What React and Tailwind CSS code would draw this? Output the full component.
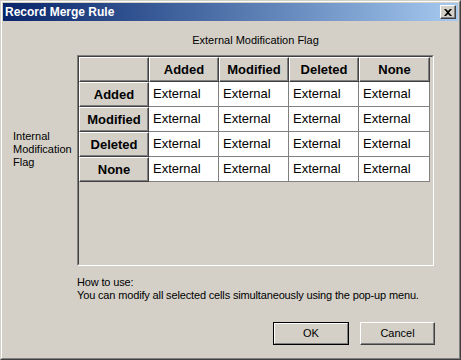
const COLS = ["Added", "Modified", "Deleted", "None"];

function HeaderCell({ children, last }) {
  return (
    <div
      className={`h-[25px] ${last ? "w-[71px]" : "w-[70px]"} flex items-center justify-center bg-[#d4d0c8] border-t border-l border-t-white border-l-white border-r border-b border-r-[#404040] border-b-[#404040] shadow-[inset_-1px_-1px_0_#808080] font-bold text-[13px] text-black`}
    >
      {children}
    </div>
  );
}

function DataCell({ last }) {
  return (
    <div
      className={`h-[25px] ${last ? "w-[71px]" : "w-[70px]"} flex items-center pl-[4px] bg-white border-r border-b border-[#808080] text-[13px] text-black`}
    >
      External
    </div>
  );
}

function Button({ children, primary }) {
  if (primary) {
    return (
      <button className="w-[76px] h-[23px] border border-black bg-[#d4d0c8] p-0">
        <div className="h-full w-full flex items-center justify-center border-t border-l border-t-white border-l-white border-r border-b border-r-[#808080] border-b-[#808080] text-[11px] text-black">
          {children}
        </div>
      </button>
    );
  }
  return (
    <button className="w-[75px] h-[23px] flex items-center justify-center bg-[#d4d0c8] border-t border-l border-t-white border-l-white border-r border-b border-r-[#404040] border-b-[#404040] shadow-[inset_-1px_-1px_0_#808080] text-[11px] text-black">
      {children}
    </button>
  );
}

export default function App() {
  return (
    <div
      className="w-[461px] h-[360px] bg-[#d4d0c8] border border-t-[#d4d0c8] border-l-[#d4d0c8] border-r-[#404040] border-b-[#404040] text-black"
      style={{ fontFamily: '"Liberation Sans", Arial, sans-serif' }}
    >
      <div className="h-full flex flex-col border border-t-white border-l-white border-r-[#808080] border-b-[#808080] p-[1px]">
        {/* title bar */}
        <div className="h-[18px] flex items-center justify-between bg-gradient-to-r from-[#0a246a] to-[#a6caf0] pl-[2px] pr-[2px]">
          <span className="text-white font-bold text-[12px] leading-none">Record Merge Rule</span>
          <div className="w-[16px] h-[14px] flex items-center justify-center bg-[#d4d0c8] border-t border-l border-t-white border-l-white border-r border-b border-r-[#404040] border-b-[#404040] shadow-[inset_-1px_-1px_0_#808080]">
            <svg width="8" height="7" viewBox="0 0 8 7">
              <path d="M0 0h2l2 2 2-2h2L5 3.5 8 7H6L4 5 2 7H0l3-3.5z" fill="#000" />
            </svg>
          </div>
        </div>

        {/* body */}
        <div className="flex">
          <div className="w-[74px] pl-[10px] pt-[11px] flex items-center text-[11px] leading-[13px]">
            <div>
              Internal
              <br />
              Modification
              <br />
              Flag
            </div>
          </div>
          <div className="w-[357px] flex flex-col">
            <div className="pt-[12px] pb-[8px] text-center text-[11px] leading-[14px]">
              External Modification Flag
            </div>
            <div className="h-[211px] border border-t-[#808080] border-l-[#808080] border-r-white border-b-white">
              <div className="h-full border border-t-[#404040] border-l-[#404040] border-r-[#d4d0c8] border-b-[#d4d0c8] bg-[#d4d0c8]">
                <div className="flex">
                  <HeaderCell />
                  {COLS.map((c, i) => (
                    <HeaderCell key={c} last={i === 3}>
                      {c}
                    </HeaderCell>
                  ))}
                </div>
                {COLS.map((r) => (
                  <div key={r} className="flex">
                    <HeaderCell>{r}</HeaderCell>
                    {COLS.map((c, i) => (
                      <DataCell key={c} last={i === 3} />
                    ))}
                  </div>
                ))}
              </div>
            </div>
          </div>
        </div>

        <div className="ml-[74px] mt-[10px] text-[11px] leading-[13px] tracking-[-0.15px]">
          <div>How to use:</div>
          <div>You can modify all selected cells simultaneously using the pop-up menu.</div>
        </div>

        <div className="flex justify-end gap-[11px] mt-[20px] pr-[23px]">
          <Button primary>OK</Button>
          <Button>Cancel</Button>
        </div>
      </div>
    </div>
  );
}
